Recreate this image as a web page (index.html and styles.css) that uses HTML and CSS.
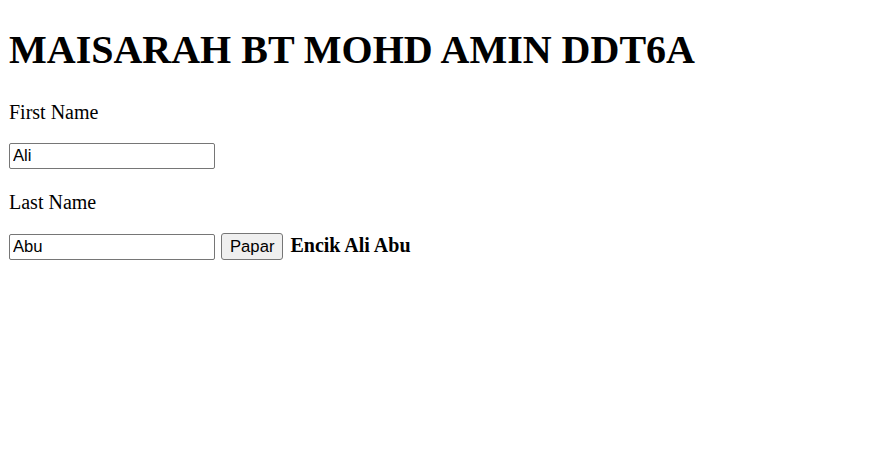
FILE: index.html
```html
<!DOCTYPE html>
<html>
<head>
<meta charset="utf-8">
<link rel="stylesheet" href="styles.css">
</head>
<body>
<h1 class="title">MAISARAH BT MOHD AMIN DDT6A</h1>
<p class="label">First Name</p>
<input class="field" type="text" value="Ali">
<p class="label">Last Name</p>
<input class="field" type="text" value="Abu"> <button class="btn">Papar</button> <b class="result">Encik Ali Abu</b>
</body>
</html>
```
FILE: styles.css
```css
body {
  margin: 0 9px;
  padding-top: 26px;
  font-family: "Liberation Serif", serif;
  font-size: 20px;
  color: #000;
  background: #fff;
}
.title {
  font-size: 40px;
  font-weight: bold;
  margin: 0 0 28px 0;
}
.label {
  margin: 22px 0 19px;
}
.field {
  font-family: "Liberation Sans", sans-serif;
  font-size: 16.67px;
  box-sizing: border-box;
  width: 206px;
  height: 26px;
  padding: 1px 3px;
  border: 1px solid #767676;
  border-radius: 2px;
  margin: 0;
  color: #000;
  background: #fff;
}
.btn {
  font-family: "Liberation Sans", sans-serif;
  font-size: 16.67px;
  box-sizing: border-box;
  height: 27px;
  padding: 1px 8px;
  border: 1px solid #767676;
  border-radius: 3px;
  background: #efefef;
  color: #000;
  margin: 0 2px 0 1px;
}
.result {
  font-weight: bold;
}
```
